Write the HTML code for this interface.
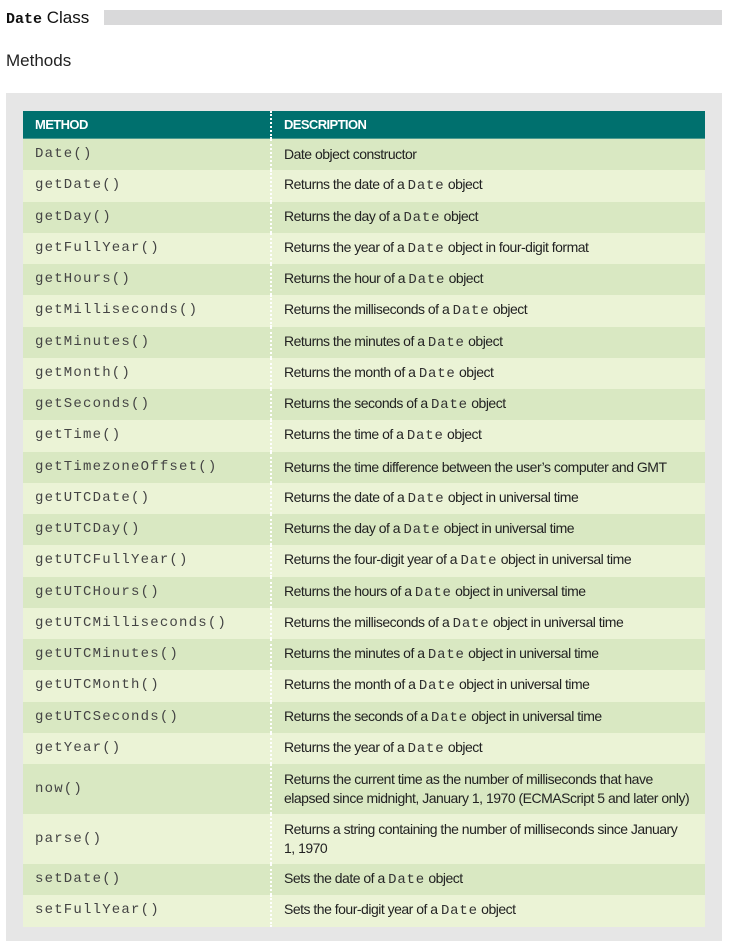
<!DOCTYPE html>
<html><head><style>
body{margin:0;width:733px;height:941px;background:#fff;position:relative;overflow:hidden;font-family:"Liberation Sans",sans-serif;}
.t{position:absolute;left:6px;top:8px;font-size:17px;color:#111;}
.t code{font-family:"Liberation Mono",monospace;font-weight:bold;font-size:15px;}
.bar{position:absolute;left:104px;top:10px;width:618px;height:15px;background:#d9d9da;}
.m{position:absolute;left:6px;top:51px;font-size:17px;color:#222;}
.box{position:absolute;left:6px;top:93px;width:716px;height:848px;background:#e6e6e6;}
table{position:absolute;left:23px;top:111px;width:682px;border-collapse:collapse;}
th{background:#00706e;color:#fff;text-align:left;font-size:13px;font-weight:bold;height:27px;padding:0 0 0 12px;letter-spacing:-0.6px;border-bottom:1px solid #4e9a90;}
td{height:31.25px;padding:0 0 0 12px;font-size:14px;color:#222;letter-spacing:-0.5px;line-height:19px;}
td:first-child{font-family:"Liberation Mono",monospace;font-size:14px;letter-spacing:1.2px;color:#444;width:235px;}
td:first-child,th:first-child{border-right:2px dotted #fff;}
td code{font-family:"Liberation Mono",monospace;font-size:14px;letter-spacing:0.8px;color:#333;}
tr:nth-child(odd) td{background:#d9e8c2;}
tr:nth-child(even) td{background:#ebf3d6;}
tr.tall td{height:50px;}
</style></head><body>
<div class="t"><code>Date</code> Class</div>
<div class="bar"></div>
<div class="m">Methods</div>
<div class="box"></div>
<table>
<thead><tr><th>METHOD</th><th>DESCRIPTION</th></tr></thead>
<tbody>
<tr><td>Date()</td><td>Date object constructor</td></tr>
<tr><td>getDate()</td><td>Returns the date of a <code>Date</code> object</td></tr>
<tr><td>getDay()</td><td>Returns the day of a <code>Date</code> object</td></tr>
<tr><td>getFullYear()</td><td>Returns the year of a <code>Date</code> object in four-digit format</td></tr>
<tr><td>getHours()</td><td>Returns the hour of a <code>Date</code> object</td></tr>
<tr><td>getMilliseconds()</td><td>Returns the milliseconds of a <code>Date</code> object</td></tr>
<tr><td>getMinutes()</td><td>Returns the minutes of a <code>Date</code> object</td></tr>
<tr><td>getMonth()</td><td>Returns the month of a <code>Date</code> object</td></tr>
<tr><td>getSeconds()</td><td>Returns the seconds of a <code>Date</code> object</td></tr>
<tr><td>getTime()</td><td>Returns the time of a <code>Date</code> object</td></tr>
<tr><td>getTimezoneOffset()</td><td>Returns the time difference between the user’s computer and GMT</td></tr>
<tr><td>getUTCDate()</td><td>Returns the date of a <code>Date</code> object in universal time</td></tr>
<tr><td>getUTCDay()</td><td>Returns the day of a <code>Date</code> object in universal time</td></tr>
<tr><td>getUTCFullYear()</td><td>Returns the four-digit year of a <code>Date</code> object in universal time</td></tr>
<tr><td>getUTCHours()</td><td>Returns the hours of a <code>Date</code> object in universal time</td></tr>
<tr><td>getUTCMilliseconds()</td><td>Returns the milliseconds of a <code>Date</code> object in universal time</td></tr>
<tr><td>getUTCMinutes()</td><td>Returns the minutes of a <code>Date</code> object in universal time</td></tr>
<tr><td>getUTCMonth()</td><td>Returns the month of a <code>Date</code> object in universal time</td></tr>
<tr><td>getUTCSeconds()</td><td>Returns the seconds of a <code>Date</code> object in universal time</td></tr>
<tr><td>getYear()</td><td>Returns the year of a <code>Date</code> object</td></tr>
<tr class="tall"><td>now()</td><td>Returns the current time as the number of milliseconds that have<br>elapsed since midnight, January 1, 1970 (ECMAScript 5 and later only)</td></tr>
<tr class="tall"><td>parse()</td><td>Returns a string containing the number of milliseconds since January<br>1, 1970</td></tr>
<tr><td>setDate()</td><td>Sets the date of a <code>Date</code> object</td></tr>
<tr><td>setFullYear()</td><td>Sets the four-digit year of a <code>Date</code> object</td></tr>
</tbody></table>
</body></html>
